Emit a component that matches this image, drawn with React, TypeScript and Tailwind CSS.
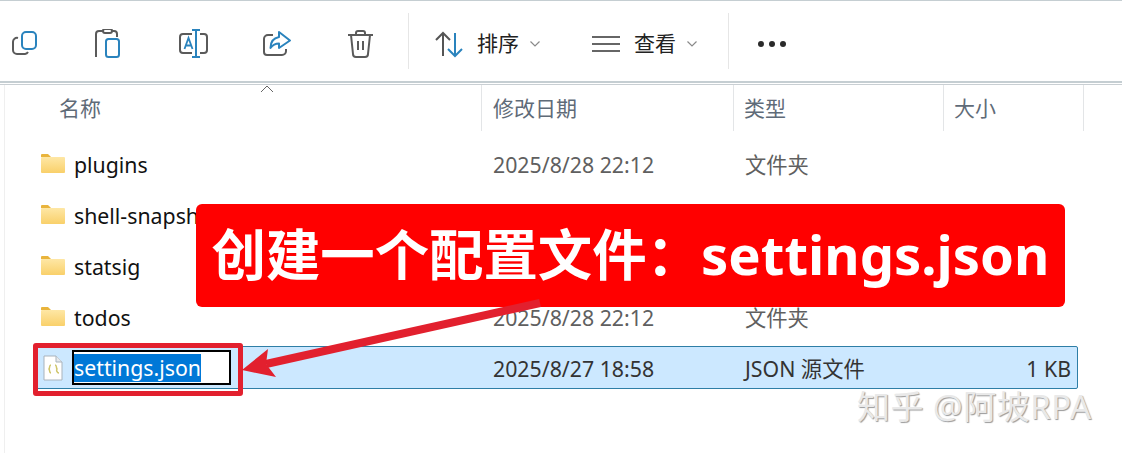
import React from "react";

const FONT = "font-['Noto_Sans','Noto_Sans_CJK_SC',sans-serif]";
const rowGrid = "grid grid-cols-[448px_252px_210px_1fr] items-center";

const folders = [
  { name: "plugins", date: "2025/8/28 22:12", kind: "文件夹" },
  { name: "shell-snapshots", date: "", kind: "" },
  { name: "statsig", date: "", kind: "" },
  { name: "todos", date: "2025/8/28 22:12", kind: "文件夹" },
];

function Folder() {
  return (
    <svg width="26" height="22" viewBox="0 0 26 22" className="shrink-0 -mt-[4px]">
      <defs>
        <linearGradient id="fold" x1="0" y1="0" x2="0" y2="1">
          <stop offset="0" stopColor="#fee7a5" />
          <stop offset="1" stopColor="#f9d06a" />
        </linearGradient>
      </defs>
      <path d="M1 3a1 1 0 0 1 1-1h6l3 3h-10z" fill="#e9b43c" />
      <rect x="1" y="5" width="24" height="16" rx="1" fill="url(#fold)" />
    </svg>
  );
}

function Chevron() {
  return (
    <svg width="10" height="6" viewBox="0 0 10 6">
      <path d="M0.5 0.5 5 5l4.5-4.5" fill="none" stroke="#8a8a8a" strokeWidth="1.2" />
    </svg>
  );
}

function ToolIcons() {
  const gray = "#5a5a5a";
  const blue = "#2a83bd";
  return (
    <div className="flex items-center gap-[54px] pl-[10px]">
      <svg width="30" height="30" viewBox="0 0 30 30">
        <rect x="12" y="3" width="14" height="17" rx="4" fill="none" stroke={blue} strokeWidth="2" />
        <path d="M8 9a4 4 0 0 0-5 4v8a4 4 0 0 0 4 4h8a4 4 0 0 0 3-2" fill="none" stroke={gray} strokeWidth="2" />
      </svg>
      <svg width="30" height="30" viewBox="0 0 30 30">
        <path d="M9 2H5a3 3 0 0 0-3 3v23M18 2h2a3 3 0 0 1 3 3v3" fill="none" stroke={gray} strokeWidth="2" />
        <rect x="9" y="0" width="9" height="4" rx="2" fill="none" stroke={gray} strokeWidth="2" />
        <rect x="12" y="10" width="13" height="18" rx="2.5" fill="none" stroke={blue} strokeWidth="2" />
      </svg>
      <svg width="30" height="30" viewBox="0 0 30 30">
        <path d="M14 5H5a3 3 0 0 0-3 3v13a3 3 0 0 0 3 3h9M22 5h4a3 3 0 0 1 3 3v13a3 3 0 0 1-3 3h-4" fill="none" stroke={gray} strokeWidth="2" />
        <path d="M14 1h8M18 1v27M14 28h8" fill="none" stroke={blue} strokeWidth="2" />
        <path d="M6.500 20 10.500 9 14.500 20M8 16.500h5" fill="none" stroke={blue} strokeWidth="1.800" />
      </svg>
      <svg width="30" height="30" viewBox="0 0 30 30">
        <path d="M11 6H6a4 4 0 0 0-4 4v13a3 3 0 0 0 3 3h15a4 4 0 0 0 4-4v-2" fill="none" stroke={gray} strokeWidth="2" />
        <path d="M17 3l11 8.500L17 19v-4.500c-4 0-6 1-8.500 4.500 0-6 3-10 8.500-11z" fill="none" stroke={blue} strokeWidth="2" strokeLinejoin="round" />
      </svg>
      <svg width="30" height="30" viewBox="0 0 30 30">
        <path d="M2 6h25M10 6V4a2 2 0 0 1 2-2h5a2 2 0 0 1 2 2v2M5 6l2 19a3 3 0 0 0 3 3h9a3 3 0 0 0 3-3l2-19M12 12v9M17 12v9" fill="none" stroke={gray} strokeWidth="2" />
      </svg>
    </div>
  );
}

export default function App() {
  return (
    <div className={`relative w-[1122px] h-[454px] overflow-hidden bg-white text-[21.3px] ${FONT}`}>
      {/* toolbar */}
      <div className="h-[83px] border-t border-[#c5ced2] border-b-[2px] border-b-[#c5ced2] flex items-center pt-[5px] box-border">
        <ToolIcons />
        <div className="w-px h-[56px] bg-[#e6e6e6] ml-[32px] -mt-[5px]" />
        <div className="flex items-center ml-[25px] text-[#222]">
          <svg width="30" height="30" viewBox="0 0 30 30">
            <path d="M9 27V4M2 11l7-7 7 7" fill="none" stroke="#555" strokeWidth="2" />
            <path d="M21 4v23M14 20l7 7 7-7" fill="none" stroke="#2a83bd" strokeWidth="2" />
          </svg>
          <span className="ml-[13px] leading-none text-[21px]">排序</span>
          <span className="ml-[11px] flex"><Chevron /></span>
          <svg width="28" height="18" viewBox="0 0 28 18" className="ml-[52px]">
            <path d="M0 2h28M0 9h28M0 16h28" stroke="#666" strokeWidth="2" />
          </svg>
          <span className="ml-[14px] leading-none text-[21px]">查看</span>
          <span className="ml-[11px] flex"><Chevron /></span>
        </div>
        <div className="w-px h-[56px] bg-[#e6e6e6] ml-[31px] -mt-[5px]" />
        <div className="flex gap-[5px] ml-[29px]">
          <span className="w-[6px] h-[6px] rounded-full bg-[#2a2a2a]" />
          <span className="w-[6px] h-[6px] rounded-full bg-[#2a2a2a]" />
          <span className="w-[6px] h-[6px] rounded-full bg-[#2a2a2a]" />
        </div>
      </div>
      <div className="h-[1px]" />
      <div className="h-px bg-[#c9cfd3]" />

      {/* list */}
      <div className="h-[368px] ml-[4px] border-l border-[#efefef]">
        <div className="relative grid grid-cols-[477px_252px_210px_140px] h-[46px] text-[21px] text-[#5f6b78]">
          <div className="pl-[54px] pt-[1px] flex items-center border-r border-[#e3e5e7]">名称</div>
          <div className="pl-[11px] pt-[1px] flex items-center border-r border-[#e3e5e7]">修改日期</div>
          <div className="pl-[10px] pt-[1px] flex items-center border-r border-[#e3e5e7]">类型</div>
          <div className="pl-[10px] pt-[1px] flex items-center border-r border-[#e3e5e7]">大小</div>
          <svg width="14" height="8" viewBox="0 0 14 8" className="absolute left-[255px] top-0">
            <path d="M1 7 7 1l6 6" fill="none" stroke="#666" strokeWidth="1" />
          </svg>
        </div>
        <div className="pt-[8px] pl-[29px]">
          {folders.map((f) => (
            <div key={f.name} className={`${rowGrid} h-[51px] w-[1044px]`}>
              <div className="flex items-center gap-[8px] pl-[6px] text-[#111]">
                <Folder />
                <span className="max-w-[122px] overflow-hidden whitespace-nowrap">{f.name}</span>
              </div>
              <span className="pl-[11px] text-[#5f5f5f]">{f.date}</span>
              <span className="pl-[11px] text-[#5f5f5f]">{f.kind}</span>
              <span />
            </div>
          ))}
          <div className={`${rowGrid} h-[43px] mt-[3px] w-[1044px] bg-[#cce8ff] border border-[#2e7ea6] rounded-[2px]`}>
            <div className="flex items-center pl-[8px]">
              <svg width="20" height="26" viewBox="0 0 20 26" className="shrink-0">
                <path d="M1 1h12l6 6v18H1z" fill="#fff" stroke="#a9b3bc" />
                <path d="M13 1v6h6" fill="#e6eaee" stroke="#a9b3bc" />
                <path d="M8 10c-2 0-1 3-2 4 1 1 0 4 2 4M12 10c2 0 1 3 2 4-1 1 0 4 2 4" fill="none" stroke="#cfc56a" strokeWidth="1.500" />
              </svg>
              <div className="ml-[9px] w-[159px] h-[35px] border-[2px] border-black bg-white flex items-center">
                <span className="bg-[#0078d7] text-white h-[28px] leading-[28px]">settings.json</span>
              </div>
            </div>
            <span className="pl-[10px] pt-[2px] text-[#333]">2025/8/27 18:58</span>
            <span className="pl-[10px] pt-[2px] text-[#333]">JSON 源文件</span>
            <span className="text-right pr-[6px] pt-[2px] text-[#333]">1 KB</span>
          </div>
        </div>
      </div>

      {/* annotation */}
      <div className="absolute left-[196px] top-[204px] w-[869px] h-[103px] pb-[3px] rounded-[6px] bg-[#ff0000] flex items-center justify-center text-white font-bold text-[54.4px] leading-none whitespace-nowrap">
        创建一个配置文件：settings.json
      </div>
      <div className="absolute left-[33px] top-[343px] w-[210px] h-[53px] border-[5px] border-[#e2202e] rounded-[3px]" />
      <svg width="320" height="100" viewBox="0 0 320 100" className="absolute left-[230px] top-[295px]">
        <path d="M310 8 36 69" stroke="#e2202e" strokeWidth="8" />
        <path d="M12 75 38 54 36 69 46 82z" fill="#e2202e" />
      </svg>
      <div className="absolute left-[857px] top-[387px] text-[33px] leading-[40px] tracking-[0.5px] text-[#e9e9e9] [text-shadow:1px_1px_1px_#9a9a9a] whitespace-pre">
        知乎 @阿坡RPA
      </div>
    </div>
  );
}
